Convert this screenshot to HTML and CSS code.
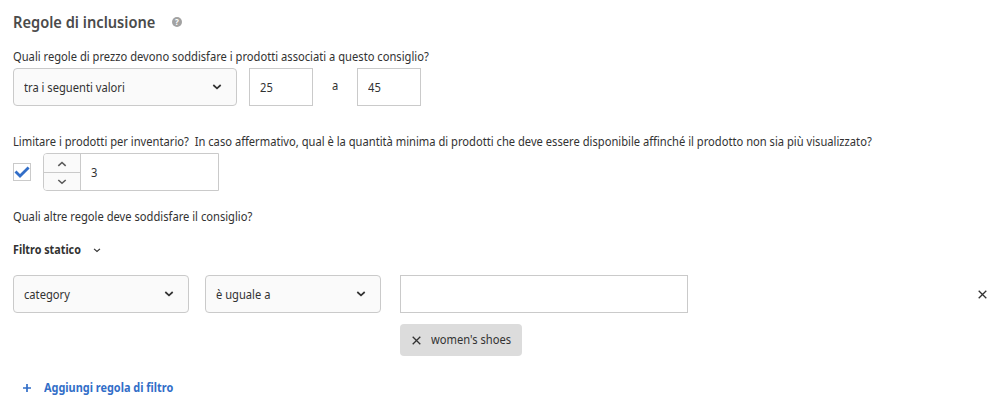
FILE: index.html
```html
<!DOCTYPE html>
<html lang="it">
<head>
<meta charset="utf-8">
<title>Regole di inclusione</title>
<link rel="stylesheet" href="styles.css">
</head>
<body>
<main class="panel">
  <header class="heading">
    <h1 class="title narrow">Regole di inclusione</h1>
    <span class="help">?</span>
  </header>

  <section class="price">
    <p class="question narrow">Quali regole di prezzo devono soddisfare i prodotti associati a questo consiglio?</p>
    <div class="row">
      <div class="select select-wide"><span class="narrow">tra i seguenti valori</span><svg class="chevron" viewBox="0 0 10 6"><path d="M1.3 1 5 4.3 8.7 1"/></svg></div>
      <div class="input input-small"><span class="narrow">25</span></div>
      <span class="between"><span class="narrow">a</span></span>
      <div class="input input-small"><span class="narrow">45</span></div>
    </div>
  </section>

  <section class="inventory">
    <p class="question narrow">Limitare i prodotti per inventario?&nbsp; In caso affermativo, qual è la quantità minima di prodotti che deve essere disponibile affinché il prodotto non sia più visualizzato?</p>
    <div class="row">
      <div class="checkbox"><svg viewBox="0 0 16 16"><path d="M1.5 7.6 6 12 14.6 3.4"/></svg></div>
      <div class="stepper">
        <div class="step-buttons">
          <div class="step"><svg class="chevron" viewBox="0 0 10 6"><path d="M1.3 4.8 5 1.5 8.7 4.8"/></svg></div>
          <div class="step"><svg class="chevron" viewBox="0 0 10 6"><path d="M1.3 1 5 4.3 8.7 1"/></svg></div>
        </div>
        <div class="step-value"><span class="narrow">3</span></div>
      </div>
    </div>
  </section>

  <section class="filters">
    <p class="question narrow">Quali altre regole deve soddisfare il consiglio?</p>
    <div class="filter-type"><span class="t-static narrow">Filtro statico</span><svg class="chevron small" viewBox="0 0 10 6"><path d="M1.3 1 5 4.3 8.7 1"/></svg></div>
    <div class="rule">
      <div class="select select-rule"><span class="narrow">category</span><svg class="chevron" viewBox="0 0 10 6"><path d="M1.3 1 5 4.3 8.7 1"/></svg></div>
      <div class="select select-rule"><span class="narrow">è uguale a</span><svg class="chevron" viewBox="0 0 10 6"><path d="M1.3 1 5 4.3 8.7 1"/></svg></div>
      <div class="values">
        <div class="input input-value"></div>
        <div class="tag"><svg class="cross" viewBox="0 0 9 9"><path d="M.7.7 8.3 8.3M8.3.7.7 8.3"/></svg><span class="narrow">women's shoes</span></div>
      </div>
      <div class="remove"><svg class="cross" viewBox="0 0 9 9"><path d="M.7.7 8.3 8.3M8.3.7.7 8.3"/></svg></div>
    </div>
    <div class="add"><svg class="plus" viewBox="0 0 8 8"><path d="M4 0V8M0 4H8"/></svg><span class="t-add narrow">Aggiungi regola di filtro</span></div>
  </section>
</main>
</body>
</html>
```
FILE: styles.css
```css
* { box-sizing: border-box; }

body {
  margin: 0;
  background: #fff;
  color: #323232;
  font: 12.5px/18px "Noto Sans", "Open Sans", sans-serif;
}

svg { display: block; flex: none; fill: none; stroke: currentColor; }

/* condensed letterforms */
.narrow { display: inline-block; transform: scaleX(.893); transform-origin: 0 50%; }

.panel { padding: 11px 16px 0 13px; white-space: nowrap; }

.heading { display: flex; align-items: center; height: 22px; gap: 16px; }
.title { margin: 0; width: 143px; font-size: 16px; line-height: 22px; font-weight: 600; color: #4b4b4b; transform: scaleX(.915); }
.help { width: 10px; height: 10px; border-radius: 50%; background: #a2a2a2; color: #fff; font-size: 8px; font-weight: 700; line-height: 10px; text-align: center; }

.question { display: block; margin: 0; height: 18px; width: 400px; }
.price { margin-top: 15px; }
.row { display: flex; margin-top: 2px; height: 38px; }

.select { display: flex; align-items: center; justify-content: space-between; height: 38px; padding: 1px 14px 0 10px; border: 1px solid #cacaca; border-radius: 4px; background: #fafafa; }
.select-wide { width: 224px; }
.select-rule { width: 176px; margin-right: 16px; }
.chevron { width: 10px; height: 6px; stroke-width: 1.7; }
.select .chevron { margin-top: -1px; }
.chevron.small { width: 8px; height: 5px; stroke-width: 1.5; margin-top: 1px; }

.input { height: 38px; border: 1px solid #cacaca; line-height: 37px; padding-left: 10px; }
.input-small { width: 64px; margin-left: 12px; }
.between { width: 32px; line-height: 35px; padding-left: 19px; }
.between + .input { margin-left: 12px; }

.inventory { margin-top: 27px; }
.checkbox { width: 18px; height: 18px; margin: 10px 12px 0 0; border: 1px solid #cacaca; color: #326ec8; }
.checkbox svg { width: 16px; height: 16px; stroke-width: 2.8; }
.stepper { display: flex; width: 176px; height: 38px; border: 1px solid #cacaca; border-radius: 4px 0 0 4px; }
.step-buttons { width: 37px; border-right: 1px solid #cacaca; background: #fafafa; color: #5a5a5a; border-radius: 3px 0 0 3px; }
.step { display: flex; align-items: center; justify-content: center; height: 18px; padding-top: 2px; }
.step .chevron { stroke-width: 1.6; }
.step + .step { border-top: 1px solid #cacaca; padding-top: 0; }
.step-value { padding-left: 10px; line-height: 38px; }

.filters { margin-top: 17px; }
.filter-type { display: flex; align-items: center; height: 18px; margin-top: 15px; }
.t-static { width: 80px; font-weight: 700; transform: scaleX(.862); }
.rule { display: flex; margin-top: 16px; height: 81px; }
.values { width: 288px; margin-left: 3px; }
.tag { display: flex; align-items: center; gap: 10px; width: 122px; height: 32px; margin-top: 11px; padding-left: 12px; border-radius: 4px; background: #dcdcdc; }
.cross { width: 9px; height: 9px; stroke-width: 1.3; }
.remove { margin-left: auto; padding-top: 15px; }
.add { display: flex; align-items: center; gap: 13px; height: 18px; margin-top: 23px; padding-left: 10px; color: #326ec8; }
.t-add { font-weight: 700; transform: scaleX(.873); }
.plus { width: 8px; height: 8px; stroke-width: 1.7; }
```
